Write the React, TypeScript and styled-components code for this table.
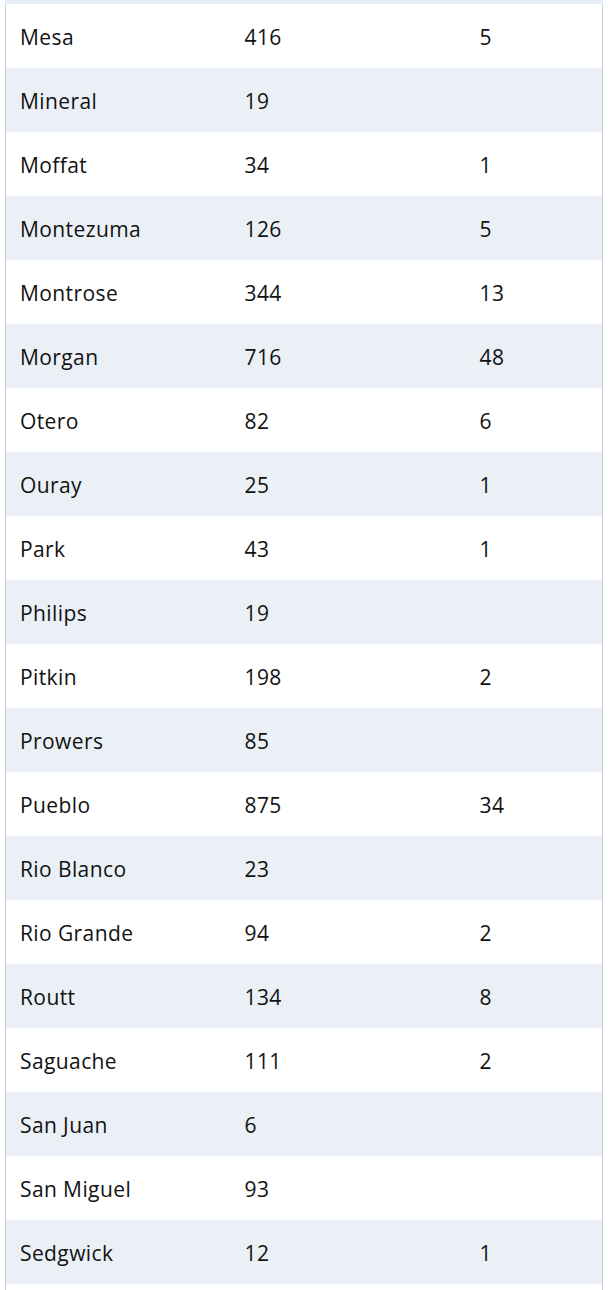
import React from "react";
import styled, { createGlobalStyle } from "styled-components";

interface ICountyRow {
  county: string;
  cases: number;
  deaths?: number;
}

const rows: ICountyRow[] = [
  { county: "Mesa", cases: 416, deaths: 5 },
  { county: "Mineral", cases: 19 },
  { county: "Moffat", cases: 34, deaths: 1 },
  { county: "Montezuma", cases: 126, deaths: 5 },
  { county: "Montrose", cases: 344, deaths: 13 },
  { county: "Morgan", cases: 716, deaths: 48 },
  { county: "Otero", cases: 82, deaths: 6 },
  { county: "Ouray", cases: 25, deaths: 1 },
  { county: "Park", cases: 43, deaths: 1 },
  { county: "Philips", cases: 19 },
  { county: "Pitkin", cases: 198, deaths: 2 },
  { county: "Prowers", cases: 85 },
  { county: "Pueblo", cases: 875, deaths: 34 },
  { county: "Rio Blanco", cases: 23 },
  { county: "Rio Grande", cases: 94, deaths: 2 },
  { county: "Routt", cases: 134, deaths: 8 },
  { county: "Saguache", cases: 111, deaths: 2 },
  { county: "San Juan", cases: 6 },
  { county: "San Miguel", cases: 93 },
  { county: "Sedgwick", cases: 12, deaths: 1 },
];

const App: React.FC = () => {
  return (
    <>
      <GlobalStyle />
      <TableWrap>
        <Table>
          <colgroup>
            <col style={{ width: 225 }} />
            <col style={{ width: 235 }} />
            <col />
          </colgroup>
          <tbody>
            {rows.map((r, i) => (
              <Row key={r.county} striped={i % 2 === 1}>
                <Cell>{r.county}</Cell>
                <Cell>{r.cases}</Cell>
                <Cell>{r.deaths ?? ""}</Cell>
              </Row>
            ))}
            {/* next row, only its top edge is in view */}
            <Row striped={false}>
              <Cell />
              <Cell />
              <Cell />
            </Row>
          </tbody>
        </Table>
      </TableWrap>
    </>
  );
};

export default App;

const GlobalStyle = createGlobalStyle`
  html, body {
    margin: 0;
    padding: 0;
    background: #ffffff;
  }
  body {
    font-family: "Open Sans", Lato, "Liberation Sans", sans-serif;
    color: #121212;
  }
`;

const TableWrap = styled.div`
  width: 608px;
  height: 1290px;
  overflow: hidden;
  padding: 0 5px;
  box-sizing: border-box;
`;

const Table = styled.table`
  width: 598px;
  border-collapse: collapse;
  table-layout: fixed;
  border-left: 1px solid #c9cdd2;
  border-right: 1px solid #c9cdd2;
  border-top: 4px solid #e6edf4;
`;

const Row = styled.tr<{ striped: boolean }>`
  height: 64px;
  background-color: ${(p) => (p.striped ? "#eaf0f6" : "#ffffff")};
`;

const Cell = styled.td`
  padding: 2px 0 0 14px;
  font-size: 21px;
  letter-spacing: 0.4px;
  line-height: 62px;
  height: 62px;
  white-space: nowrap;
  vertical-align: middle;
`;
